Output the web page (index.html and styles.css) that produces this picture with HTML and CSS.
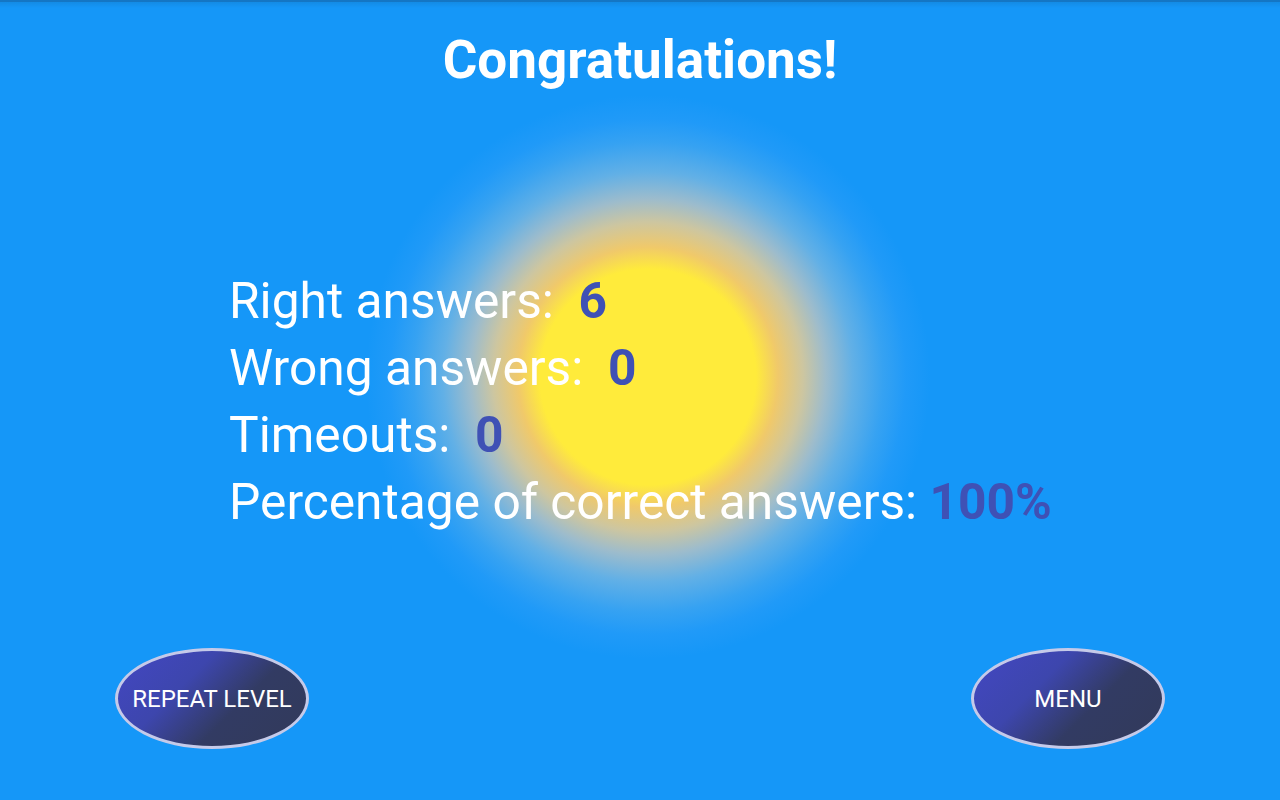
FILE: index.html
```html
<!DOCTYPE html>
<html>
<head>
<meta charset="utf-8">
<link rel="stylesheet" href="styles.css">
</head>
<body>
<div class="screen">
  <h1 class="title">Congratulations!</h1>
  <div class="stats">
    <div class="row">Right answers:&nbsp; <b class="num">6</b></div>
    <div class="row">Wrong answers:&nbsp; <b class="num">0</b></div>
    <div class="row">Timeouts:&nbsp; <b class="num">0</b></div>
    <div class="row">Percentage of correct answers: <b class="num">100%</b></div>
  </div>
  <div class="buttons">
    <button class="oval">REPEAT LEVEL</button>
    <button class="oval">MENU</button>
  </div>
</div>
</body>
</html>
```
FILE: styles.css
```css
html, body {
  margin: 0;
  padding: 0;
  height: 100%;
}
body {
  font-family: Roboto, "Liberation Sans", sans-serif;
  background-color: #1597f8;
  background-image: radial-gradient(circle at 648px 377px,
    #ffeb3b 0px, #ffeb3b 108px, #f0c96a 130px, #cdc6a0 155px,
    #9dbccc 178px, #62b0e6 205px, #36a2f2 235px, #209af8 258px, #1597f8 282px);
  overflow: hidden;
}
.screen {
  position: relative;
  height: 800px;
  box-sizing: border-box;
  border-top: 2px solid #1476c4;
  display: flex;
  flex-direction: column;
}
.screen::before {
  content: "";
  position: absolute;
  left: 0; right: 0; top: 0;
  height: 6px;
  background: linear-gradient(rgba(0,0,0,0.08), rgba(0,0,0,0));
}
.title {
  margin: 26px 0 0;
  text-align: center;
  color: #fff;
  font-weight: 700;
  font-size: 53px;
  line-height: 64px;
}
.stats {
  margin: 176px 0 0 229px;
  color: #fff;
  font-size: 49.7px;
  line-height: 67px;
}
.row {
  white-space: nowrap;
}
.num {
  color: #3f51b5;
  font-weight: 700;
}
.buttons {
  margin-top: auto;
  margin-bottom: 51px;
  padding: 0 115px 0 115px;
  display: flex;
  justify-content: space-between;
}
.oval {
  width: 194px;
  height: 101px;
  border-radius: 50%;
  border: 3px solid #c5cae9;
  background: linear-gradient(135deg, #4347c2 0%, #3d46ad 35%, #323b63 62%, #323a5a 100%);
  color: #fff;
  font-family: Roboto, "Liberation Sans", sans-serif;
  font-size: 24px;
  padding: 0;
  box-sizing: border-box;
}
```
